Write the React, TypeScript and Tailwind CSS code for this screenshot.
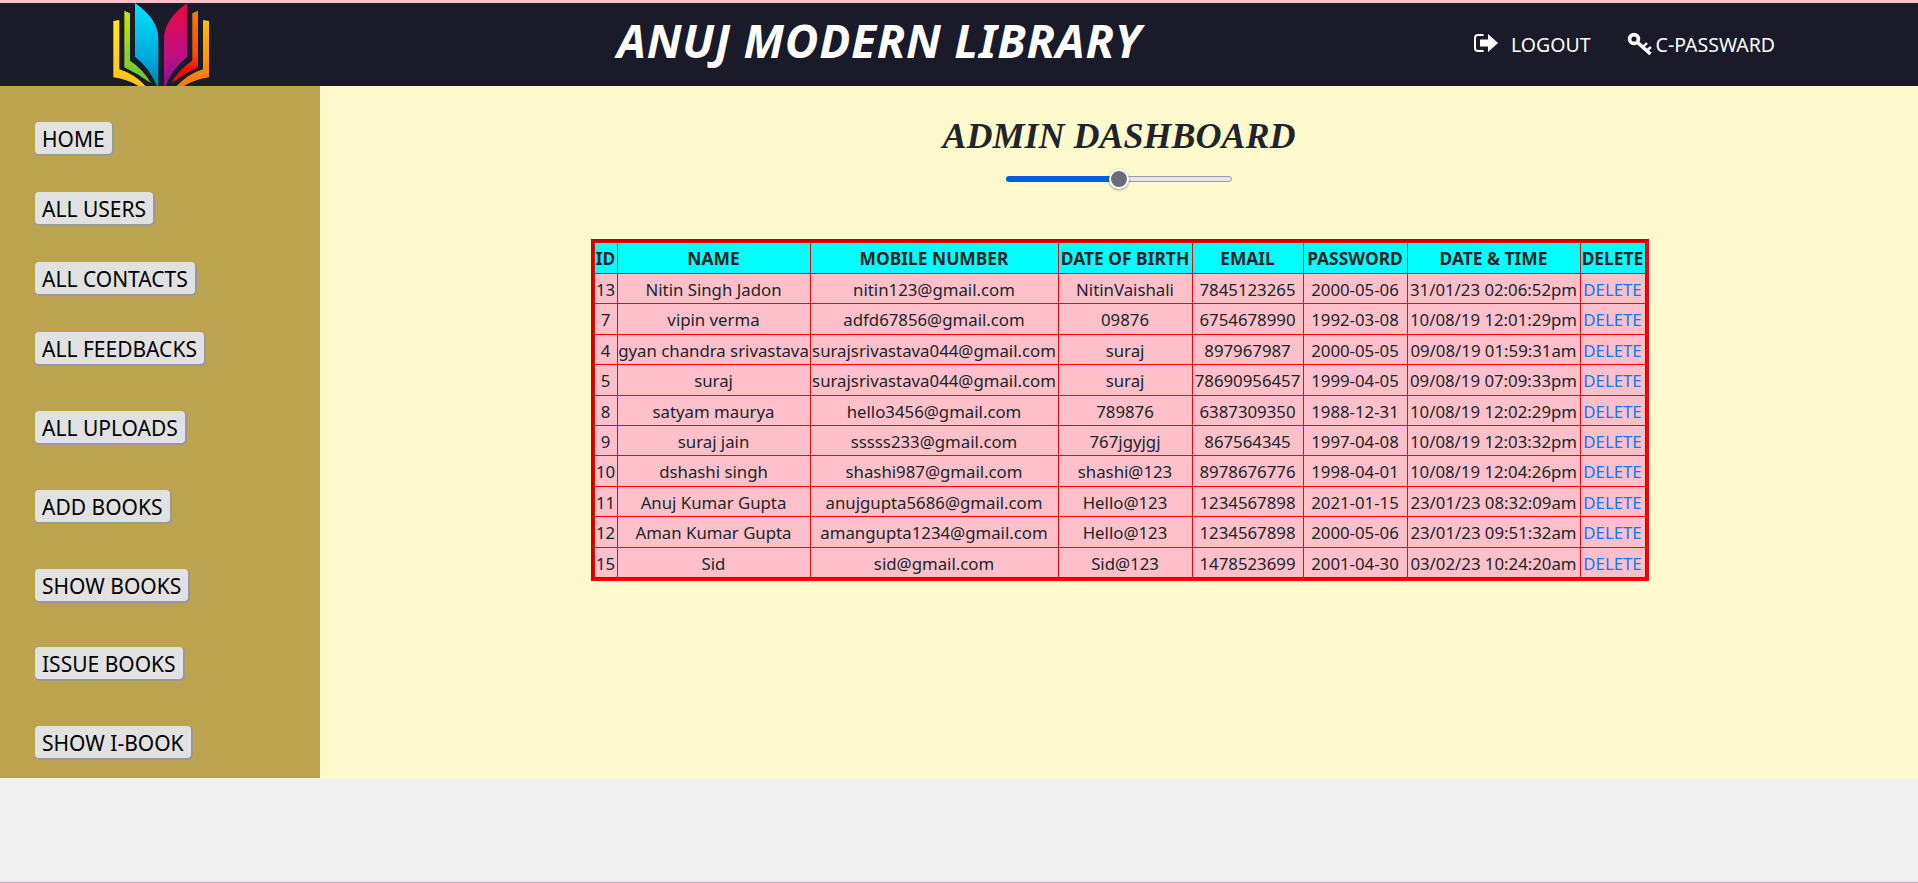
const menu = [
  { label: "HOME", gap: "mt-[36px]" },
  { label: "ALL USERS", gap: "mt-[38px]" },
  { label: "ALL CONTACTS", gap: "mt-[38px]" },
  { label: "ALL FEEDBACKS", gap: "mt-[38px]" },
  { label: "ALL UPLOADS", gap: "mt-[47px]" },
  { label: "ADD BOOKS", gap: "mt-[47px]" },
  { label: "SHOW BOOKS", gap: "mt-[47px]" },
  { label: "ISSUE BOOKS", gap: "mt-[46px]" },
  { label: "SHOW I-BOOK", gap: "mt-[47px]" },
];

const rows = [
  ["13", "Nitin Singh Jadon", "nitin123@gmail.com", "NitinVaishali", "7845123265", "2000-05-06", "31/01/23 02:06:52pm"],
  ["7", "vipin verma", "adfd67856@gmail.com", "09876", "6754678990", "1992-03-08", "10/08/19 12:01:29pm"],
  ["4", "gyan chandra srivastava", "surajsrivastava044@gmail.com", "suraj", "897967987", "2000-05-05", "09/08/19 01:59:31am"],
  ["5", "suraj", "surajsrivastava044@gmail.com", "suraj", "78690956457", "1999-04-05", "09/08/19 07:09:33pm"],
  ["8", "satyam maurya", "hello3456@gmail.com", "789876", "6387309350", "1988-12-31", "10/08/19 12:02:29pm"],
  ["9", "suraj jain", "sssss233@gmail.com", "767jgyjgj", "867564345", "1997-04-08", "10/08/19 12:03:32pm"],
  ["10", "dshashi singh", "shashi987@gmail.com", "shashi@123", "8978676776", "1998-04-01", "10/08/19 12:04:26pm"],
  ["11", "Anuj Kumar Gupta", "anujgupta5686@gmail.com", "Hello@123", "1234567898", "2021-01-15", "23/01/23 08:32:09am"],
  ["12", "Aman Kumar Gupta", "amangupta1234@gmail.com", "Hello@123", "1234567898", "2000-05-06", "23/01/23 09:51:32am"],
  ["15", "Sid", "sid@gmail.com", "Sid@123", "1478523699", "2001-04-30", "03/02/23 10:24:20am"],
];

const headers = ["ID", "NAME", "MOBILE NUMBER", "DATE OF BIRTH", "EMAIL", "PASSWORD", "DATE & TIME", "DELETE"];
const colWidths = ["w-[23px]", "w-[193px]", "w-[248px]", "w-[134px]", "w-[111px]", "w-[104px]", "w-[173px]", "w-[65px]"];

function Logo() {
  return (
    <svg viewBox="0 9 330 249" className="ml-[105px] h-[83px] w-[110px] shrink-0">
      <defs>
        <linearGradient id="yel" x1="0" y1="0" x2="0" y2="1">
          <stop offset="0" stopColor="#ffe81a" />
          <stop offset="1" stopColor="#ffc21a" />
        </linearGradient>
        <linearGradient id="grn" x1="0" y1="0" x2="0" y2="1">
          <stop offset="0" stopColor="#c4e60e" />
          <stop offset="1" stopColor="#5fc83a" />
        </linearGradient>
        <linearGradient id="blu" x1="0" y1="0" x2="0" y2="1">
          <stop offset="0" stopColor="#00e4fa" />
          <stop offset="0.7" stopColor="#00a4dc" />
          <stop offset="1" stopColor="#0a7ea6" />
        </linearGradient>
        <linearGradient id="mag" x1="0" y1="0" x2="0" y2="1">
          <stop offset="0" stopColor="#ea0a3a" />
          <stop offset="0.65" stopColor="#bb1088" />
          <stop offset="1" stopColor="#821492" />
        </linearGradient>
        <linearGradient id="red" x1="0" y1="0" x2="0" y2="1">
          <stop offset="0" stopColor="#ff7a00" />
          <stop offset="0.6" stopColor="#ff4a08" />
          <stop offset="0.8" stopColor="#ee0f10" />
        </linearGradient>
        <linearGradient id="org" x1="0" y1="0" x2="0" y2="1">
          <stop offset="0" stopColor="#ffc000" />
          <stop offset="1" stopColor="#ff7414" />
        </linearGradient>
      </defs>
      <path d="M25 63 L43 60 L43 208 Q88 222 122 258 L100 258 Q68 238 25 232 Z" fill="url(#yel)" />
      <path d="M58 32 L75 40 L75 182 Q115 208 138 250 Q100 222 58 202 Z" fill="url(#grn)" />
      <path d="M90 9 Q160 58 160 115 L160 258 L155 258 Q135 205 90 170 Z" fill="url(#blu)" />
      <g transform="translate(337 0) scale(-1 1)">
        <path d="M25 63 L43 60 L43 208 Q88 222 122 258 L100 258 Q68 238 25 232 Z" fill="url(#org)" />
        <path d="M58 32 L75 40 L75 182 Q115 208 138 250 Q100 222 58 202 Z" fill="url(#red)" />
        <path d="M90 9 Q160 58 160 115 L160 258 L155 258 Q135 205 90 170 Z" fill="url(#mag)" />
      </g>
    </svg>
  );
}

function LogoutIcon() {
  return (
    <svg viewBox="0 0 24 18" className="mr-[13px] mb-[4px] h-[18px] w-[24px] shrink-0">
      <path d="M9.5 1H4a3 3 0 0 0-3 3v10a3 3 0 0 0 3 3h5.5" fill="none" stroke="white" strokeWidth="2" />
      <path d="M6 5.5H14V0L24 9 14 18V12.5H6Z" fill="white" />
    </svg>
  );
}

function KeyIcon() {
  return (
    <svg viewBox="0 0 26 24" className="mb-[2px] block h-[24px] w-[26px] shrink-0" fill="none" stroke="white">
      <circle cx="7" cy="7" r="4.4" strokeWidth="3.6" />
      <path d="M10.5 10.5 L23.5 22" strokeWidth="3.6" />
      <path d="M16.5 14.5 L20 11 M20.5 18 L24 15" strokeWidth="2.4" />
    </svg>
  );
}

function Header() {
  return (
    <header className="flex h-[86px] items-center border-t-[3px] border-[#ffc0cb] bg-[#1a1a28] text-white">
      <Logo />
      <h1 className="ml-[402px] w-[560px] shrink-0 pb-[9px] text-[46px] font-bold tracking-[0.74px] whitespace-nowrap italic">
        ANUJ MODERN LIBRARY
      </h1>
      <div className="ml-[-102px] flex h-full items-center pt-[1px] pl-[399px] text-[19.5px] whitespace-nowrap">
        <LogoutIcon />
        <span>LOGOUT</span>
        <span className="ml-[36px]">
          <KeyIcon />
        </span>
        <span className="ml-[3px]">C-PASSWARD</span>
      </div>
    </header>
  );
}

function Sidebar() {
  return (
    <aside className="flex w-[320px] shrink-0 flex-col items-start bg-[#bca34f] pl-[35px]">
      {menu.map((item) => (
        <button
          key={item.label}
          className={`${item.gap} h-[32px] rounded-[4px] bg-[#e1e1e1] px-[7px] pt-[2px] text-[21px] leading-[30px] text-black shadow-[1px_1px_0_1px_#999]`}
        >
          {item.label}
        </button>
      ))}
    </aside>
  );
}

function Slider() {
  return (
    <div className="relative mt-[19px] flex h-[6px] w-[226px] overflow-visible">
      <div className="h-full w-[113px] rounded-l-[3px] bg-[#0060df]" />
      <div className="h-full flex-1 rounded-r-[3px] border border-[#9a9aa8] bg-[#e6e6ea]" />
      <div className="absolute top-[-7px] left-[103px] h-[20px] w-[20px] rounded-full border-2 border-white bg-[#6b6b7a] shadow-[0_1px_3px_rgba(0,0,0,0.4)]" />
    </div>
  );
}

function UserTable() {
  const cell = "border border-[#ff0000] p-0 text-center last:border-r-[#c80000]";
  return (
    <div className="mt-[57px] ml-[1px] border-[3px] border-t-[#c80000] border-r-[#ff0000] border-b-[#ff0000] border-l-[#c80000]">
      <table className="w-[1051px] table-fixed border-collapse text-[16.8px] whitespace-nowrap text-[#212529]">
        <colgroup>
          {colWidths.map((w) => (
            <col key={w} className={w} />
          ))}
        </colgroup>
        <thead>
          <tr className="h-[31px] bg-[#00ffff]">
            {headers.map((h) => (
              <th key={h} className={`${cell} pt-[1px] text-[17.4px] font-bold`}>
                {h}
              </th>
            ))}
          </tr>
        </thead>
        <tbody className="[&>tr:last-child>td]:border-b-[#c80000]">
          {rows.map((r) => (
            <tr key={r[0]} className="h-[30.4px] bg-[#ffc0cb]">
              {r.map((v, i) => (
                <td key={i} className={`${cell} pt-[2px]`}>
                  {v}
                </td>
              ))}
              <td className={`${cell} pt-[2px]`}>
                <a className="text-[#007bff]">DELETE</a>
              </td>
            </tr>
          ))}
        </tbody>
      </table>
    </div>
  );
}

export default function App() {
  return (
    <div className="flex h-[883px] flex-col overflow-hidden bg-[#f0f0f0] font-['Noto_Sans',sans-serif]">
      <Header />
      <div className="flex h-[692px]">
        <Sidebar />
        <main className="flex flex-1 flex-col items-center bg-[#fffacd] pt-[29px]">
          <h2 className="font-['Liberation_Serif',serif] text-[36px] leading-[42px] font-bold text-[#212529] italic">ADMIN DASHBOARD</h2>
          <Slider />
          <UserTable />
        </main>
      </div>
      <div className="flex-1 border-b border-[#b8a4b8]" />
    </div>
  );
}
